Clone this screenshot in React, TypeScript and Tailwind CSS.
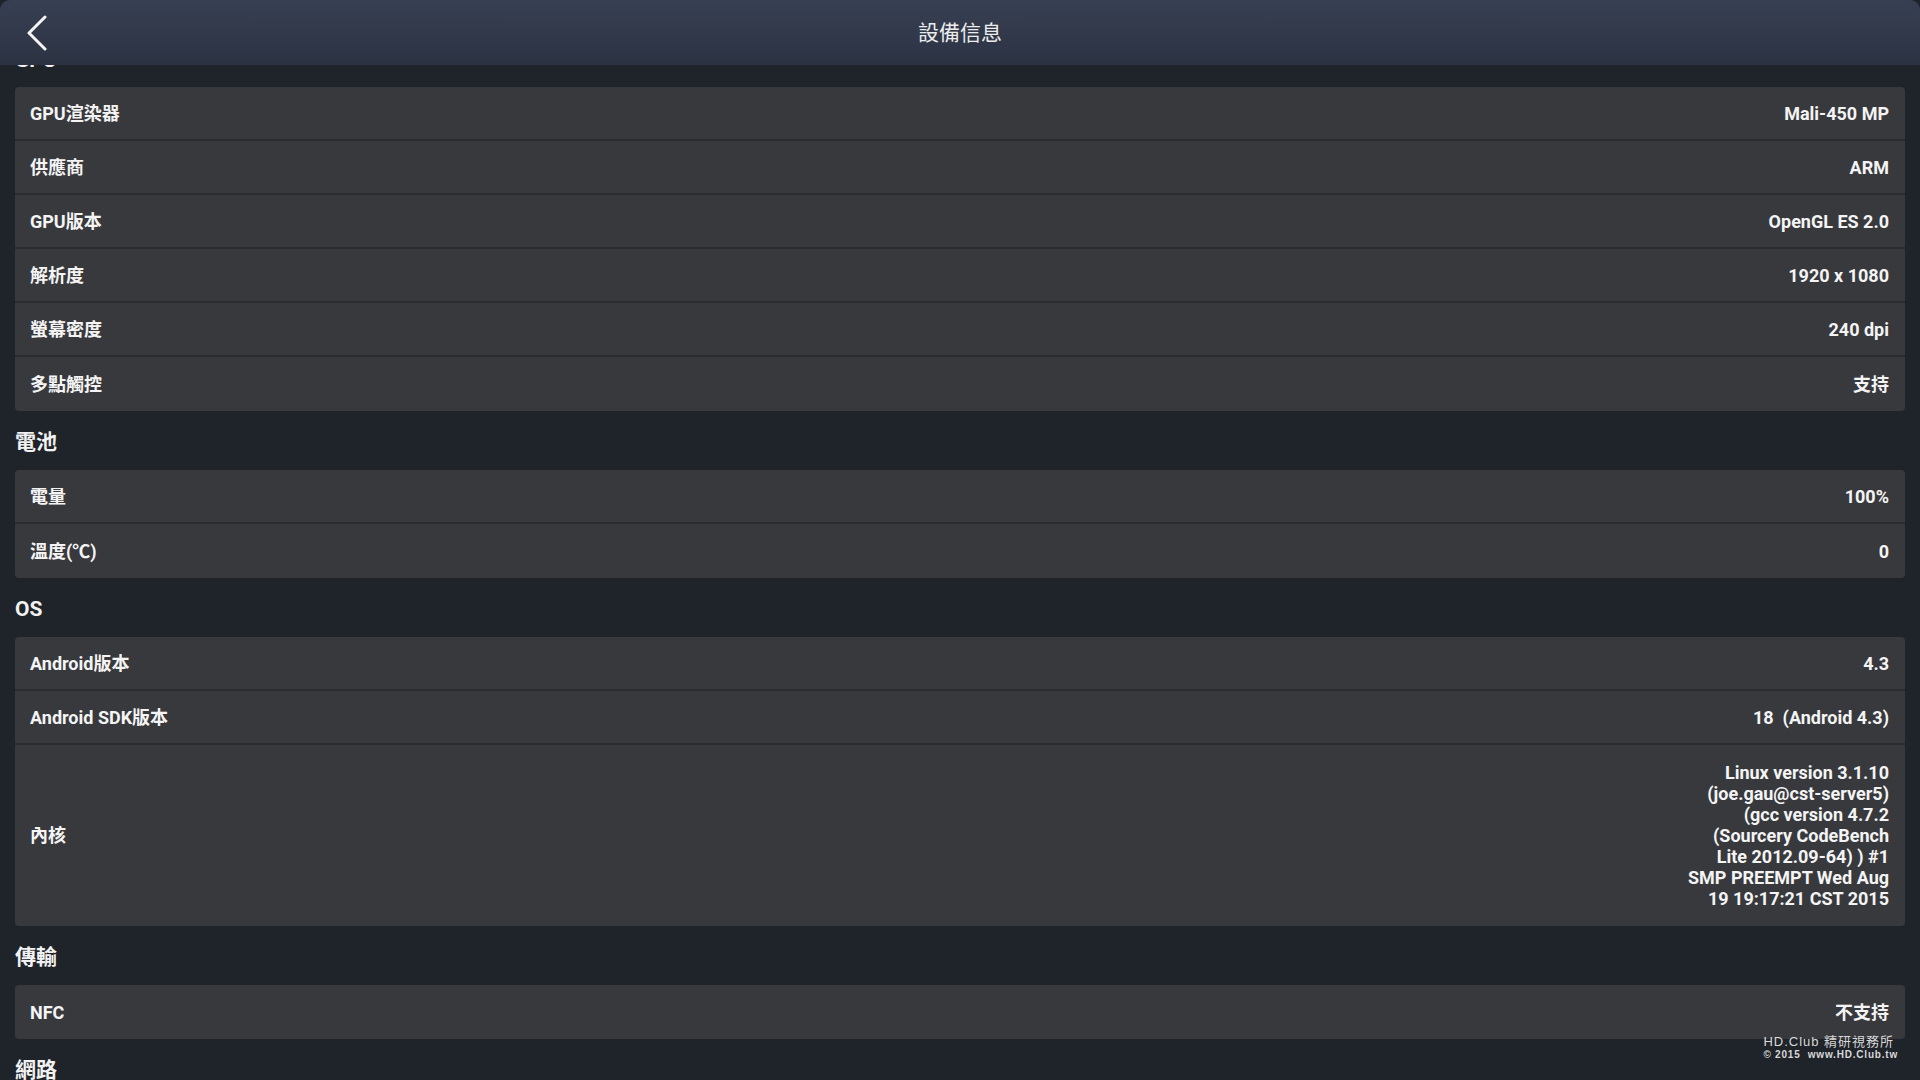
import React from 'react';

type Row = { label: string; value: React.ReactNode };

const FONT = "font-['Roboto','Noto_Sans_CJK_TC',sans-serif]";

function Section({ title, rows, first }: { title: string; rows: Row[]; first?: boolean }) {
    return (
        <div>
            {/* section heading */}
            <div className={first ? 'pt-[20px] pb-[15px] px-[15px]' : 'pt-[19px] pb-[16px] px-[15px]'}>
                <div className="text-[21px] leading-[24px] font-bold text-[#f2f2f2]">{title}</div>
            </div>

            {/* card */}
            <div className="mx-[15px] rounded-[4px] bg-[#38393d] overflow-hidden">
                {rows.map((r, i) => (
                    <div
                        key={r.label}
                        className={
                            'flex items-center justify-between pl-[15px] pr-[16px] min-h-[54px] ' +
                            (i < rows.length - 1 ? 'border-b-2 border-[#2b2c2f]' : '')
                        }
                    >
                        <span className="text-[18px] font-bold text-[#f4f4f4]">{r.label}</span>
                        <span className="text-[18px] font-bold text-[#f4f4f4] text-right whitespace-pre">{r.value}</span>
                    </div>
                ))}
            </div>
        </div>
    );
}

const kernelLines = [
    'Linux version 3.1.10',
    '(joe.gau@cst-server5)',
    '(gcc version 4.7.2',
    '(Sourcery CodeBench',
    'Lite 2012.09-64) ) #1',
    'SMP PREEMPT Wed Aug',
    '19 19:17:21 CST 2015',
];

export default function App() {
    return (
        <div className={`relative h-screen w-full flex flex-col bg-[#1f232a] overflow-hidden ${FONT}`}>

            {/* Top bar */}
            <header className="h-[65px] shrink-0 rounded-t-[10px] bg-gradient-to-b from-[#373f52] to-[#2b3343] grid grid-cols-[1fr_auto_1fr] items-center">
                <div className="pl-[26px] pt-[1px] flex items-center">
                    <svg width="22" height="36" viewBox="0 0 22 36" fill="none">
                        <polyline points="19,2 3,18 19,34" stroke="#f5f5f5" strokeWidth="3" strokeLinecap="round" strokeLinejoin="round" />
                    </svg>
                </div>
                <h1 className="pt-[3px] text-[21px] font-normal text-[#ececec]">設備信息</h1>
                <div />
            </header>

            {/* Scrolled list */}
            <main className="flex-1 overflow-hidden">
                <div className="mt-[-37px]">
                    <Section
                        first
                        title="GPU"
                        rows={[
                            { label: 'GPU渲染器', value: 'Mali-450 MP' },
                            { label: '供應商', value: 'ARM' },
                            { label: 'GPU版本', value: 'OpenGL ES 2.0' },
                            { label: '解析度', value: '1920 x 1080' },
                            { label: '螢幕密度', value: '240 dpi' },
                            { label: '多點觸控', value: '支持' },
                        ]}
                    />
                    <Section
                        title="電池"
                        rows={[
                            { label: '電量', value: '100%' },
                            { label: '溫度(℃)', value: '0' },
                        ]}
                    />
                    <Section
                        title="OS"
                        rows={[
                            { label: 'Android版本', value: '4.3' },
                            { label: 'Android SDK版本', value: '18  (Android 4.3)' },
                            {
                                label: '內核',
                                value: (
                                    <span className="block py-[17px] leading-[21px]">
                                        {kernelLines.map((l) => (
                                            <span key={l} className="block">{l}</span>
                                        ))}
                                    </span>
                                ),
                            },
                        ]}
                    />
                    <Section title="傳輸" rows={[{ label: 'NFC', value: '不支持' }]} />
                    <Section
                        title="網路"
                        rows={[
                            { label: 'WLAN', value: '支持' },
                            { label: '藍牙', value: '支持' },
                        ]}
                    />
                </div>
            </main>

            {/* watermark */}
            <div className="absolute right-[22px] bottom-[20px] text-[#d8d8d8] font-['Liberation_Sans','Noto_Sans_CJK_TC',sans-serif] leading-none">
                <div className="text-[13px] tracking-[1px]">HD.Club 精研視務所</div>
                <div className="mt-[2px] text-[10px] font-bold tracking-[0.8px] whitespace-pre">© 2015  www.HD.Club.tw</div>
            </div>
        </div>
    );
}
